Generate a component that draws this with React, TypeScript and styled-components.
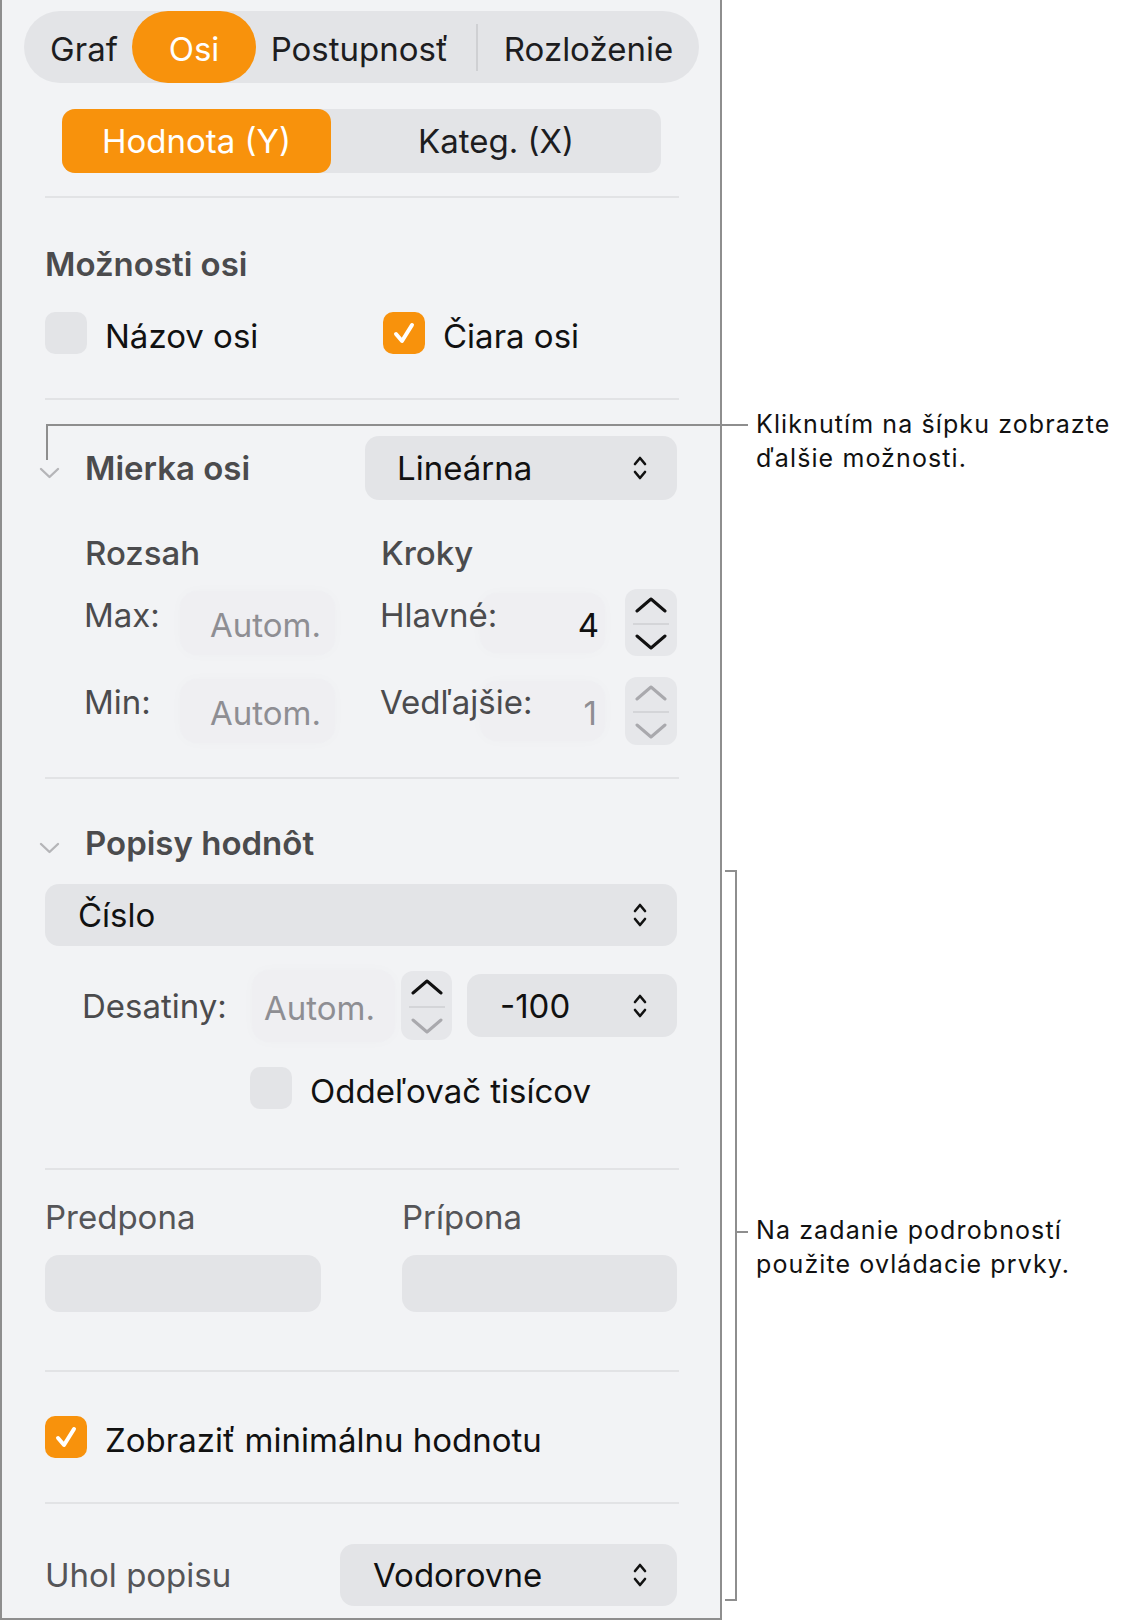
import styled, { createGlobalStyle } from "styled-components"

const Global = createGlobalStyle`
  body {
    margin: 0;
    background: #ffffff;
    font-family: Inter, "Noto Sans", sans-serif;
  }
`

const orange = "#f8920c"
const control = "#e3e4e7"

const Page = styled.div`
  position: relative;
  display: flex;
  width: 1125px;
  height: 1620px;
`

const Panel = styled.div`
  width: 722px;
  box-sizing: border-box;
  border: 2px solid #8e8e8e;
  border-top: none;
  background: #f2f3f5;
  padding: 11px 0 9px;
  font-size: 33px;
  line-height: 40px;
  color: #1d1d1f;
`

const TabBar = styled.div`
  display: flex;
  align-items: center;
  height: 72px;
  margin: 0 21px 0 22px;
  border-radius: 36px;
  background: ${control};
`

const Tab = styled.div<{ $active?: boolean; $w: number; $shift?: number }>`
  display: flex;
  align-items: center;
  justify-content: center;
  box-sizing: border-box;
  width: ${(p) => p.$w}px;
  height: 72px;
  border-radius: 36px;
  padding-top: 4px;
  padding-left: ${(p) => Math.max(p.$shift || 0, 0)}px;
  padding-right: ${(p) => Math.max(-(p.$shift || 0), 0)}px;
  background: ${(p) => (p.$active ? orange : "transparent")};
  color: ${(p) => (p.$active ? "#fff" : "#1d1d1f")};
`

const TabDivider = styled.div`
  width: 2px;
  height: 47px;
  background: #cfd0d3;
`

const SubSeg = styled.div`
  display: flex;
  height: 64px;
  margin: 26px 59px 0 60px;
  border-radius: 13px;
  background: ${control};
`

const SubItem = styled.div<{ $active?: boolean }>`
  display: flex;
  align-items: center;
  justify-content: center;
  flex: ${(p) => (p.$active ? "0 0 269px" : "1")};
  border-radius: 13px;
  background: ${(p) => (p.$active ? orange : "transparent")};
  color: ${(p) => (p.$active ? "#fff" : "#1d1d1f")};
`

const Divider = styled.div<{ $top: number }>`
  height: 2px;
  margin: ${(p) => p.$top}px 41px 0 43px;
  background: #e2e3e5;
`

const Body = styled.div<{ $top: number }>`
  margin-top: ${(p) => p.$top}px;
  padding: 0 43px;
`

const Heading = styled.div<{ $weight?: number; $color?: string }>`
  font-weight: ${(p) => p.$weight || 600};
  color: ${(p) => p.$color || "#4b4b4d"};
  line-height: 40px;
`

const CheckGrid = styled.div`
  display: grid;
  grid-template-columns: 338px 1fr;
  height: 42px;
`

const CheckRow = styled.div<{ $indent?: number }>`
  display: flex;
  align-items: center;
  height: 42px;
  padding-left: ${(p) => p.$indent || 0}px;
`

const CheckText = styled.span`
  padding-top: 5px;
  color: #111;
`

const Box = styled.div<{ $on?: boolean }>`
  flex: 0 0 42px;
  width: 42px;
  height: 42px;
  border-radius: 10px;
  background: ${(p) => (p.$on ? orange : control)};
  display: flex;
  align-items: center;
  justify-content: center;
  margin-right: 18px;
`

const DisclosureRow = styled.div<{ $h: number }>`
  display: flex;
  align-items: center;
  height: ${(p) => p.$h}px;
`

const Disclosure = styled.div`
  display: flex;
  margin-left: -6px;
  margin-right: 25px;
  width: 21px;
  padding-top: 10px;
`

const Popup = styled.div<{ $w?: number; $h: number; $pad?: number }>`
  display: flex;
  align-items: center;
  justify-content: space-between;
  box-sizing: border-box;
  width: ${(p) => (p.$w ? `${p.$w}px` : "100%")};
  height: ${(p) => p.$h}px;
  margin-left: auto;
  padding: 0 30px 0 ${(p) => p.$pad || 32}px;
  border-radius: 14px;
  background: ${control};
  color: #111;
`

const ColumnHeads = styled.div`
  display: grid;
  grid-template-columns: 296px 1fr;
  margin-top: 33px;
  padding-left: 83px;
`

const StepRow = styled.div<{ $h: number; $top: number }>`
  display: flex;
  align-items: center;
  height: ${(p) => p.$h}px;
  margin-top: ${(p) => p.$top}px;
  padding-right: 43px;
`

const RowLabel = styled.div<{ $w: number; $indent?: number; $lift?: number }>`
  position: relative;
  z-index: 1;
  box-sizing: border-box;
  flex: 0 0 ${(p) => p.$w}px;
  width: ${(p) => p.$w}px;
  min-width: 0;
  padding-left: ${(p) => p.$indent || 0}px;
  margin-bottom: ${(p) => (p.$lift || 0) * 2}px;
  color: #4b4b4d;
  white-space: nowrap;
  overflow: visible;
`

const Field = styled.div<{ $w: number; $h: number; $pad?: number; $right?: boolean; $dim?: boolean }>`
  display: flex;
  align-items: center;
  justify-content: ${(p) => (p.$right ? "flex-end" : "flex-start")};
  box-sizing: border-box;
  flex: 0 0 ${(p) => p.$w}px;
  height: ${(p) => p.$h}px;
  padding: 4px ${(p) => (p.$right ? p.$pad || 0 : 0)}px 0 ${(p) => (p.$right ? 0 : p.$pad || 0)}px;
  border-radius: 16px;
  background: rgba(236, 237, 240, 0.6);
  box-shadow: 0 0 14px rgba(0, 0, 0, 0.02);
  color: ${(p) => (p.$dim ? "#8e8e93" : "#111")};
`

const Stepper = styled.div<{ $w: number; $h: number; $ml: number }>`
  display: flex;
  flex-direction: column;
  align-items: center;
  justify-content: space-between;
  box-sizing: border-box;
  flex: 0 0 ${(p) => p.$w}px;
  height: ${(p) => p.$h}px;
  margin-left: ${(p) => p.$ml}px;
  padding: 8px 0 6px;
  border-radius: 12px;
  background: #e6e7ea;
`

const StepLine = styled.div`
  width: 36px;
  height: 2px;
  background: #d4d5d8;
`

const PairGrid = styled.div<{ $top: number }>`
  display: grid;
  grid-template-columns: 276px 275px;
  column-gap: 81px;
  margin-top: ${(p) => p.$top}px;
`

const Blank = styled.div`
  height: 57px;
  border-radius: 14px;
  background: ${control};
`

const Note = styled.div`
  font-family: Inter, "Noto Sans", sans-serif;
  font-size: 25px;
  line-height: 34px;
  letter-spacing: 1.1px;
  color: #111;
`

const Overlay = styled.div`
  position: absolute;
  inset: 0;
  pointer-events: none;
`

const Pin = styled.div<{ $x: number; $y: number }>`
  position: absolute;
  left: ${(p) => p.$x}px;
  top: ${(p) => p.$y}px;
`

const HLine = styled(Pin)<{ $len: number }>`
  width: ${(p) => p.$len}px;
  height: 2px;
  background: #8e8e8e;
`

const VLine = styled(Pin)<{ $len: number }>`
  width: 2px;
  height: ${(p) => p.$len}px;
  background: #8e8e8e;
`

function UpDown() {
  return (
    <svg width="14" height="28" viewBox="0 0 14 28">
      <path d="M2 10 L7 4 L12 10 M2 18 L7 24 L12 18" fill="none" stroke="#111" strokeWidth="2.6" strokeLinecap="round" strokeLinejoin="round" />
    </svg>
  )
}

function Chevron(props: { up?: boolean; color: string }) {
  const d = props.up ? "M2 14 L16 2 L30 14" : "M2 2 L16 14 L30 2"
  return (
    <svg width="32" height="16" viewBox="0 0 32 16">
      <path d={d} fill="none" stroke={props.color} strokeWidth="3" strokeLinecap="round" strokeLinejoin="round" />
    </svg>
  )
}

function Caret() {
  return (
    <svg width="21" height="12" viewBox="0 0 21 12">
      <path d="M2 2 L10.5 10 L19 2" fill="none" stroke="#b5b5b8" strokeWidth="2.4" strokeLinecap="round" strokeLinejoin="round" />
    </svg>
  )
}

function Check() {
  return (
    <svg width="28" height="28" viewBox="0 0 28 28">
      <path d="M6 15 L12 22 L22 6" fill="none" stroke="#fff" strokeWidth="4" strokeLinecap="round" strokeLinejoin="round" />
    </svg>
  )
}

function StepperBox(props: { w: number; h: number; ml: number; dimUp?: boolean; dimDown?: boolean }) {
  return (
    <Stepper $w={props.w} $h={props.h} $ml={props.ml}>
      <Chevron up color={props.dimUp ? "#a9a9ad" : "#111"} />
      <StepLine />
      <Chevron color={props.dimDown ? "#a9a9ad" : "#111"} />
    </Stepper>
  )
}

export default function App() {
  return (
    <Page>
      <Global />
      <Panel>
        <TabBar>
          <Tab $w={108} $shift={12}>Graf</Tab>
          <Tab $w={124} $active>Osi</Tab>
          <Tab $w={220} $shift={-13}>Postupnosť</Tab>
          <TabDivider />
          <Tab $w={221}>Rozloženie</Tab>
        </TabBar>

        <SubSeg>
          <SubItem $active>Hodnota (Y)</SubItem>
          <SubItem>Kateg. (X)</SubItem>
        </SubSeg>

        <Divider $top={23} />

        <Body $top={46}>
          <Heading>Možnosti osi</Heading>
        </Body>
        <Body $top={28}>
          <CheckGrid>
            <CheckRow>
              <Box />
              <CheckText>Názov osi</CheckText>
            </CheckRow>
            <CheckRow>
              <Box $on>
                <Check />
              </Box>
              <CheckText>Čiara osi</CheckText>
            </CheckRow>
          </CheckGrid>
        </Body>

        <Divider $top={44} />

        <Body $top={36}>
          <DisclosureRow $h={64}>
            <Disclosure>
              <Caret />
            </Disclosure>
            <Heading>Mierka osi</Heading>
            <Popup $w={312} $h={64}>
              Lineárna
              <UpDown />
            </Popup>
          </DisclosureRow>
        </Body>

        <ColumnHeads>
          <Heading $weight={500}>Rozsah</Heading>
          <Heading $weight={500}>Kroky</Heading>
        </ColumnHeads>

        <StepRow $h={67} $top={16}>
          <RowLabel $w={178} $indent={82} $lift={8}>Max:</RowLabel>
          <Field $w={155} $h={64} $pad={30} $dim>Autom.</Field>
          <RowLabel $w={145} $indent={45} $lift={8}>Hlavné:</RowLabel>
          <Field $w={125} $h={60} $pad={6} $right>4</Field>
          <StepperBox w={52} h={67} ml={20} />
        </StepRow>

        <StepRow $h={68} $top={21}>
          <RowLabel $w={178} $indent={82} $lift={9}>Min:</RowLabel>
          <Field $w={155} $h={64} $pad={30} $dim>Autom.</Field>
          <RowLabel $w={145} $indent={45} $lift={9}>Vedľajšie:</RowLabel>
          <Field $w={125} $h={60} $pad={8} $right $dim>1</Field>
          <StepperBox w={52} h={68} ml={20} dimUp dimDown />
        </StepRow>

        <Divider $top={32} />

        <Body $top={44}>
          <DisclosureRow $h={40}>
            <Disclosure>
              <Caret />
            </Disclosure>
            <Heading>Popisy hodnôt</Heading>
          </DisclosureRow>
        </Body>

        <Body $top={21}>
          <Popup $h={62} $pad={33}>
            Číslo
            <UpDown />
          </Popup>
        </Body>

        <StepRow $h={69} $top={25}>
          <RowLabel $w={250} $indent={80}>Desatiny:</RowLabel>
          <Field $w={143} $h={72} $pad={12} $dim>Autom.</Field>
          <StepperBox w={51} h={69} ml={6} dimDown />
          <Popup $w={210} $h={63} $pad={33}>
            -100
            <UpDown />
          </Popup>
        </StepRow>

        <Body $top={27}>
          <CheckRow $indent={205}>
            <Box />
            <CheckText>Oddeľovač tisícov</CheckText>
          </CheckRow>
        </Body>

        <Divider $top={59} />

        <Body $top={27}>
          <PairGrid $top={0}>
            <Heading $weight={400} $color="#555558">Predpona</Heading>
            <Heading $weight={400} $color="#555558">Prípona</Heading>
          </PairGrid>
          <PairGrid $top={18}>
            <Blank />
            <Blank />
          </PairGrid>
        </Body>

        <Divider $top={58} />

        <Body $top={44}>
          <CheckRow>
            <Box $on>
              <Check />
            </Box>
            <CheckText>Zobraziť minimálnu hodnotu</CheckText>
          </CheckRow>
        </Body>

        <Divider $top={44} />

        <Body $top={40}>
          <DisclosureRow $h={62}>
            <Heading $weight={400} $color="#555558">Uhol popisu</Heading>
            <Popup $w={337} $h={62} $pad={33}>
              Vodorovne
              <UpDown />
            </Popup>
          </DisclosureRow>
        </Body>
      </Panel>

      <Overlay>
        <HLine $x={47} $y={424} $len={701} />
        <VLine $x={46} $y={424} $len={36} />
        <Pin $x={756} $y={407}>
          <Note>
            Kliknutím na šípku zobrazte
            <br />
            ďalšie možnosti.
          </Note>
        </Pin>

        <HLine $x={725} $y={870} $len={12} />
        <VLine $x={735} $y={870} $len={731} />
        <HLine $x={725} $y={1599} $len={12} />
        <HLine $x={735} $y={1231} $len={13} />
        <Pin $x={756} $y={1213}>
          <Note>
            Na zadanie podrobností
            <br />
            použite ovládacie prvky.
          </Note>
        </Pin>
      </Overlay>
    </Page>
  )
}
